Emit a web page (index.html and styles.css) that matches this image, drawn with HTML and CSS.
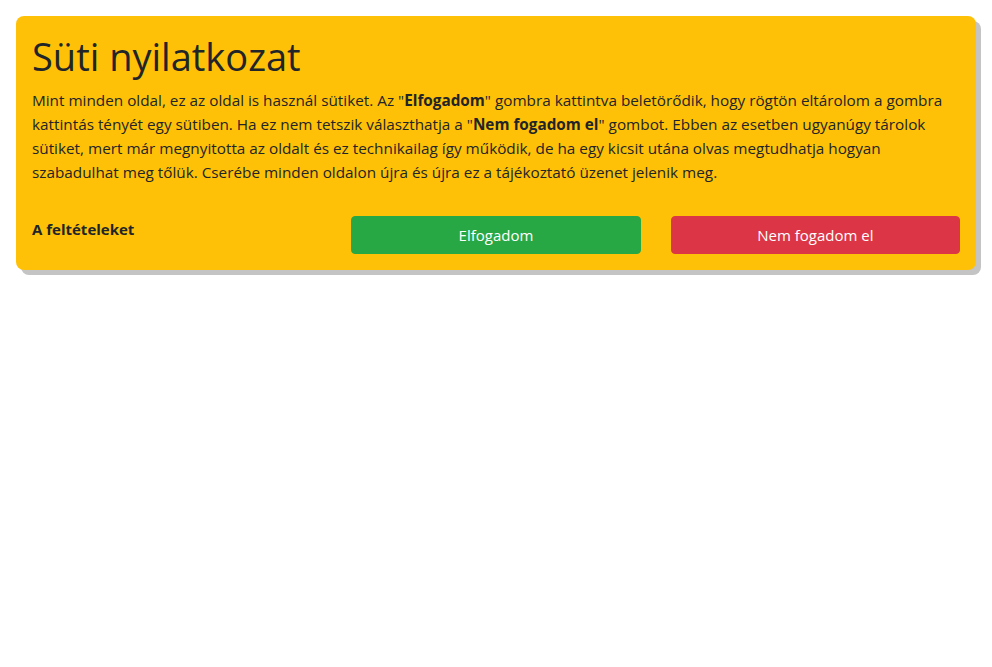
FILE: index.html
```html
<!DOCTYPE html>
<html lang="hu">
<head>
<meta charset="utf-8">
<title>Süti nyilatkozat</title>
<link rel="stylesheet" href="styles.css">
</head>
<body>
<div class="cookie">
  <h1 class="cookie-title">Süti nyilatkozat</h1>
  <p class="cookie-text">Mint minden oldal, ez az oldal is használ sütiket. Az "<b>Elfogadom</b>" gombra kattintva beletörődik, hogy rögtön eltárolom a gombra kattintás tényét egy sütiben. Ha ez nem tetszik választhatja a "<b>Nem fogadom el</b>" gombot. Ebben az esetben ugyanúgy tárolok sütiket, mert már megnyitotta az oldalt és ez technikailag így működik, de ha egy kicsit utána olvas megtudhatja hogyan szabadulhat meg tőlük. Cserébe minden oldalon újra és újra ez a tájékoztató üzenet jelenik meg.</p>
  <div class="cookie-row">
    <a class="cookie-terms" href="#">A feltételeket</a>
    <button class="btn btn-accept">Elfogadom</button>
    <button class="btn btn-decline">Nem fogadom el</button>
  </div>
</div>
</body>
</html>
```
FILE: styles.css
```css
html, body {
  margin: 0;
  padding: 0;
  background: #fff;
}
body {
  font-family: "Open Sans", "Noto Sans", sans-serif;
  color: #212529;
  font-size: 16px;
  line-height: 24px;
  padding: 16px;
}
.cookie {
  background: #ffc107;
  border-radius: 8px;
  box-shadow: 5px 5px 0 #c4c4c4;
  padding: 16px;
}
.cookie-title {
  margin: 0 0 8px;
  font-size: 38px;
  line-height: 48px;
  font-weight: 400;
}
.cookie-text {
  margin: 0 0 15px;
  font-size: 15.3px;
}
.cookie-text b {
  font-weight: 700;
}
.cookie-row {
  display: grid;
  grid-template-columns: 1fr 1fr 1fr;
  column-gap: 30px;
  align-items: start;
  padding-top: 17px;
}
.cookie-terms {
  color: #212529;
  font-weight: 700;
  text-decoration: none;
  font-size: 15px;
  padding-top: 1px;
}
.btn {
  font-family: inherit;
  font-size: 15px;
  line-height: 24px;
  padding: 6px 12px;
  border: 1px solid transparent;
  border-radius: 4px;
  color: #fff;
  cursor: pointer;
}
.btn-accept {
  background: #28a745;
  border-color: #28a745;
}
.btn-decline {
  background: #dc3545;
  border-color: #dc3545;
}
```
